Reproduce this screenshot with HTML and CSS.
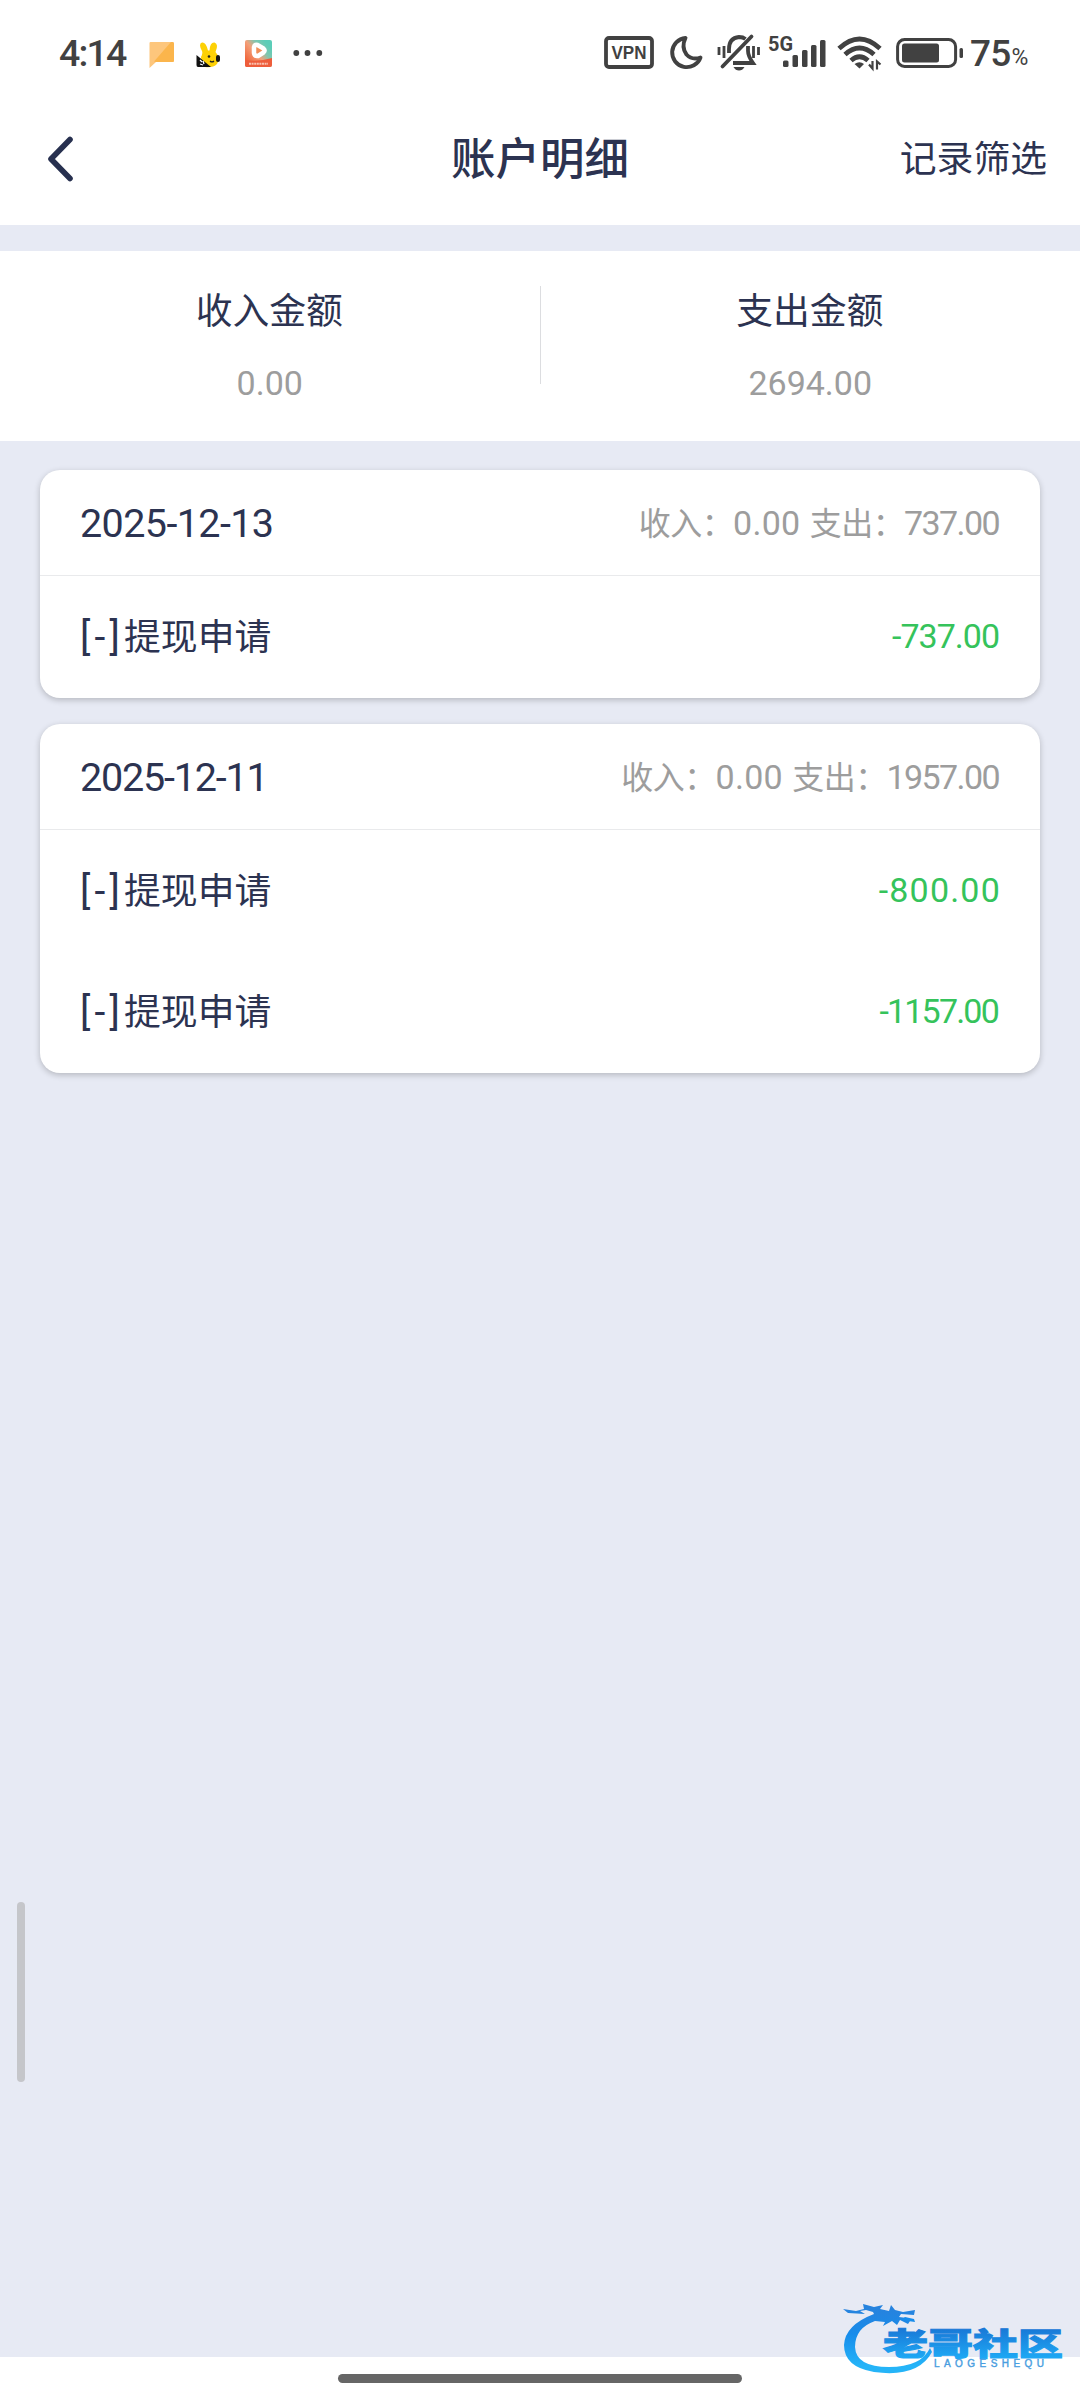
FILE: index.html
```html
<!DOCTYPE html>
<html lang="zh-CN">
<head>
<meta charset="utf-8">
<title>账户明细</title>
<link rel="stylesheet" href="styles.css">
</head>
<body>
<div class="status">
  <span class="clock">4:14</span>
  <svg class="i-chat" width="26" height="28" viewBox="0 0 26 28"><path d="M1.500 1H23.500Q25 1 25 2.500V19.500Q25 21 23.500 21H7L0.500 27V2Q0.500 1 1.500 1Z" fill="#fdc67c"/><path d="M22 1H23.500Q25 1 25 2.500V19.500Q25 21 23.500 21H7L5 20.500Z" fill="#fbb54c"/></svg>
  <svg class="i-rabbit" width="25" height="26" viewBox="0 0 25 26"><path d="M5 15Q7 11 6 9Q2 2 6 0.500Q10 0 12 8.500H13.500Q14 0 18.500 0.500Q23 2 19.500 10Q25 16 21 22Q17 26 9 25Q5 20 5 15Z" fill="#fdd106"/><path d="M0.500 13L15 25H2Q0.500 25 0.500 23Z" fill="#111"/><path d="M4 18l2 2M7 19l1 3M4 22l3 1" stroke="#fff" stroke-width="1.300"/><circle cx="13" cy="14.500" r="1.300" fill="#222"/><rect x="20" y="13" width="4" height="7" rx="2" fill="#151515"/><path d="M14 19q2 2 4 0" fill="none" stroke="#222" stroke-width="1.200"/></svg>
  <svg class="i-video" width="27" height="27" viewBox="0 0 27 27"><defs><linearGradient id="vg" x1="0.100" y1="0.800" x2="0.850" y2="0.150"><stop offset="0" stop-color="#f0663b"/><stop offset="0.450" stop-color="#f3a079"/><stop offset="0.700" stop-color="#83c5ae"/><stop offset="1" stop-color="#5bcdb8"/></linearGradient></defs><rect width="27" height="27" rx="2" fill="url(#vg)"/><path d="M0 20Q14 22 27 18V25Q27 27 25 27H2Q0 27 0 25Z" fill="#ee5d3b"/><path d="M9 7Q9.500 4 12.500 5L18.500 8.500Q20.500 10.500 18.500 12.500L13 16Q9.500 16.500 9 13Z" fill="#f08e57" stroke="#fff" stroke-width="4.500" stroke-linejoin="round"/><path d="M4 23.700H23" stroke="#f9c0ae" stroke-width="2" stroke-dasharray="2 .6"/></svg>
  <svg class="i-dots" width="30" height="8" viewBox="0 0 30 8" fill="#414141"><circle cx="3.300" cy="4" r="2.900"/><circle cx="14.500" cy="4" r="2.900"/><circle cx="26.300" cy="4" r="2.900"/></svg>
  <svg class="i-vpn" width="50" height="33" viewBox="0 0 50 33"><rect x="2" y="2" width="46" height="29" rx="3" fill="none" stroke="#414141" stroke-width="3.800"/><text x="25" y="22.500" text-anchor="middle" class="vpn" textLength="35" lengthAdjust="spacingAndGlyphs">VPN</text></svg>
  <svg class="i-moon" width="34" height="34" viewBox="0 0 34 34"><path d="M16.500 2A14.600 14.600 0 1 0 31.500 21.500Q23 24.500 17.500 18.500Q12 11 16.500 2Z" fill="none" stroke="#414141" stroke-width="3.900" stroke-linejoin="round"/></svg>
  <svg class="i-bell" width="44" height="38" viewBox="0 0 44 38" fill="none" stroke="#414141" stroke-width="3.800"><path d="M12 19V15Q12 4 22 3Q26 3 28.500 5"/><path d="M31 12V17Q31 22 36 29H16"/><path d="M5.500 32.500L34.500 2.500" stroke-linecap="round"/><path d="M16.500 33H27.500Q25.500 36.500 22 36.500Q18.500 36.500 16.500 33Z" fill="#414141" stroke="none"/><path d="M2 13V21M7 12V24M36.500 12V24M41.500 13V21" stroke-width="2.800"/></svg>
  <svg class="i-signal" width="60" height="34" viewBox="0 0 60 34" fill="#414141"><text x="0" y="16" class="net" textLength="25" lengthAdjust="spacingAndGlyphs">5G</text><rect x="15" y="25.500" width="5.500" height="6.500" rx="1.500"/><rect x="24.500" y="20" width="5.500" height="12" rx="1.500"/><rect x="34" y="15" width="5.500" height="17" rx="1.500"/><rect x="43" y="10" width="5.500" height="22" rx="1.500"/><rect x="52" y="5" width="5.500" height="27" rx="1.500"/></svg>
  <svg class="i-wifi" width="46" height="34" viewBox="0 0 46 34" fill="none" stroke="#414141" stroke-width="4.800"><path d="M2 12.500Q22.500-6.500 43 12.500"/><path d="M8 18.500Q22.500 5.500 37 18.500"/><path d="M14 24.500Q22.500 17 31 24.500"/><path d="M17.500 28Q22.500 24.500 27 28L22.500 32.500Z" fill="#414141" stroke="none"/><path d="M32 28.500L35.500 32.500V25M43.500 28.500L40 25.500V33.500" stroke-width="2.200"/></svg>
  <svg class="i-battery" width="68" height="30" viewBox="0 0 68 30"><rect x="1.600" y="1.600" width="58" height="26.800" rx="7" fill="none" stroke="#414141" stroke-width="3"/><rect x="6" y="5.500" width="37" height="19" rx="2.500" fill="#414141"/><rect x="63.500" y="10" width="3.500" height="10" rx="1.500" fill="#414141"/></svg>
  <span class="level">75</span><span class="pct">%</span>
</div>

<header class="nav">
  <svg class="back" width="28" height="46" viewBox="0 0 28 46"><path d="M24 3.500L5 23L24 42.500" fill="none" stroke="#27304f" stroke-width="5.600" stroke-linecap="round" stroke-linejoin="round"/></svg>
  <h1 class="title">账户明细</h1>
  <a class="filter">记录筛选</a>
</header>

<section class="summary">
  <div class="total"><span class="label">收入金额</span><span class="value">0.00</span></div>
  <div class="rule"></div>
  <div class="total"><span class="label">支出金额</span><span class="value">2694.00</span></div>
</section>

<main class="list">
  <article class="card">
    <div class="head"><span class="date">2025-12-13</span><span class="sums">收入：<b>0.00</b> 支出：<b class="spent">737.00</b></span></div>
    <div class="row"><span class="name"><b>[-]</b>提现申请</span><span class="amount snug">-737.00</span></div>
  </article>
  <article class="card">
    <div class="head"><span class="date narrow">2025-12-11</span><span class="sums">收入：<b>0.00</b> 支出：<b class="spent">1957.00</b></span></div>
    <div class="row"><span class="name"><b>[-]</b>提现申请</span><span class="amount loose">-800.00</span></div>
    <div class="row"><span class="name"><b>[-]</b>提现申请</span><span class="amount narrow">-1157.00</span></div>
  </article>
</main>

<footer class="home"><div class="pill"></div></footer>

<div class="handle"></div>
<svg class="brand" width="226" height="80" viewBox="0 0 226 80">
  <defs><linearGradient id="bg" x1="0" y1="0" x2="0" y2="80" gradientUnits="userSpaceOnUse"><stop offset="0.100" stop-color="#2683de"/><stop offset="0.400" stop-color="#178ceb"/><stop offset="0.800" stop-color="#25b4f8"/></linearGradient>
  <linearGradient id="tg" x1="0" y1="26" x2="0" y2="56" gradientUnits="userSpaceOnUse"><stop offset="0" stop-color="#1977d6"/><stop offset="1" stop-color="#1ea8f4"/></linearGradient></defs>
  <path d="M33 12Q4 23 3 43Q3 65 33 70Q77 76 91 50L89 46Q80 65 48 65Q15 65 14 45Q14 26 34 19L44 20L42 24L51 19L56 23L59 18L67 22L69 19L66 16L58 15L60 12L73 13L74 8L62 10L54 8L50 3L48 9L39 7L42 3L33 5L22 2L23 7L15 9L2 7L7 11L24 12L19 9L25 8L32 10Z" fill="url(#bg)"/>
  <path d="M60 18L74 20L73 17L64 15Z" fill="#178ceb"/>
  <text x="42" y="52.500" class="brand-cn" textLength="180" lengthAdjust="spacingAndGlyphs">老哥社区</text>
  <text x="93" y="64.500" class="brand-en" textLength="110" lengthAdjust="spacing">LAOGESHEQU</text>
</svg>
</body>
</html>
```
FILE: styles.css
```css
* { box-sizing: border-box; }
body {
  position: relative;
  display: flex;
  flex-direction: column;
  width: 1080px;
  height: 2400px;
  margin: 0;
  background: #e7eaf4;
  color: #2c3351;
  font-family: Roboto, "Noto Sans CJK SC", sans-serif;
  overflow: hidden;
}
svg { display: block; flex: none; overflow: visible; }
b { font-weight: 400; }

.status {
  display: flex;
  align-items: flex-start;
  height: 92px;
  padding-left: 59px;
  background: #fff;
  color: #414141;
}
.clock { width: 90px; margin-top: 32px; font-size: 37.500px; line-height: 42px; font-weight: 500; letter-spacing: -1.800px; }
.i-chat { margin-top: 41px; }
.i-rabbit { margin: 42px 0 0 21px; }
.i-video { margin: 40px 0 0 24px; }
.i-dots { margin: 49px 0 0 21px; }
.i-vpn { margin: 36px 0 0 281px; }
.i-moon { margin: 36px 0 0 15px; }
.i-bell { margin: 34px 0 0 14px; }
.i-signal { margin: 35px 0 0 7px; }
.i-wifi { margin: 36px 0 0 9px; }
.i-battery { margin: 38px 0 0 13px; }
.vpn { font: 700 18px "Liberation Sans", sans-serif; fill: #414141; }
.net { font: 700 20px Roboto, sans-serif; }
.level { margin: 33px 0 0 6px; font-size: 37px; line-height: 42px; font-weight: 500; letter-spacing: -0.800px; }
.pct { margin: 45px 0 0 1px; font-size: 23px; line-height: 26px; }

.nav {
  display: grid;
  grid-template-columns: 1fr auto 1fr;
  align-items: center;
  height: 133px;
  padding: 0 33px 0 46px;
  background: #fff;
}
.back { margin-top: 1px; }
.title { margin: 2px 13px 0 0; font-size: 44.500px; line-height: 60px; font-weight: 500; }
.filter { justify-self: end; margin-top: 2px; font-size: 36.800px; line-height: 50px; }

.summary {
  display: flex;
  height: 190px;
  margin-top: 26px;
  background: #fff;
}
.total {
  flex: 1;
  display: flex;
  flex-direction: column;
  align-items: center;
  padding-top: 36px;
}
.label { margin-right: 1px; font-size: 36.800px; line-height: 50px; }
.value { margin-top: 25px; color: #9d9d9d; font-size: 34px; line-height: 42px; }
.rule { width: 1px; height: 98px; margin-top: 35px; background: #dcdde0; }

.list {
  flex: 1;
  display: flex;
  flex-direction: column;
  gap: 26.500px;
  padding: 29px 40px 0;
}
.card {
  border-radius: 20px;
  background: #fff;
  box-shadow: 0 2px 6px rgba(0, 0, 0, 0.22);
}
.head, .row {
  display: flex;
  align-items: center;
  justify-content: space-between;
  padding: 0 40px;
}
.head { height: 106px; border-bottom: 1px solid #e9eaec; }
.row { height: 121.500px; }
.date { padding-top: 1px; font-size: 39.500px; letter-spacing: -0.600px; }
.date.narrow { letter-spacing: -1.200px; }
.sums { margin-bottom: 4px; color: #9d9d9d; font-size: 32px; letter-spacing: -0.600px; white-space: pre; word-spacing: 2px; }
.sums b { font-size: 34px; letter-spacing: 0.300px; }
.sums .spent { margin-right: 1px; letter-spacing: -1.600px; }
.name { margin-bottom: 6px; font-size: 36.800px; }
.name b { font-size: 39px; letter-spacing: 4.200px; }
.amount { margin-bottom: 2px; color: #35c35b; font-size: 34px; }
.amount.snug { margin-right: 1px; letter-spacing: -1px; }
.amount.loose { margin-right: -1px; letter-spacing: 1.200px; }
.amount.narrow { margin-right: 2px; letter-spacing: -1.800px; }

.home {
  display: flex;
  justify-content: center;
  height: 43px;
  padding-top: 17px;
  background: #fff;
}
.pill { width: 404px; height: 9px; border-radius: 5px; background: #666; }

.handle {
  position: absolute;
  left: 17px;
  top: 1902px;
  width: 8px;
  height: 180px;
  border-radius: 4px;
  background: #c5c6ca;
}
.brand { position: absolute; left: 841px; top: 2302px; }
.brand-cn { font: 900 31px "Noto Sans CJK SC", sans-serif; fill: url(#tg); stroke: url(#tg); stroke-width: 1px; }
.brand-en { font: 400 10px "Liberation Sans", sans-serif; fill: #4a9ee0; stroke: #4a9ee0; stroke-width: 0.4px; }
```
